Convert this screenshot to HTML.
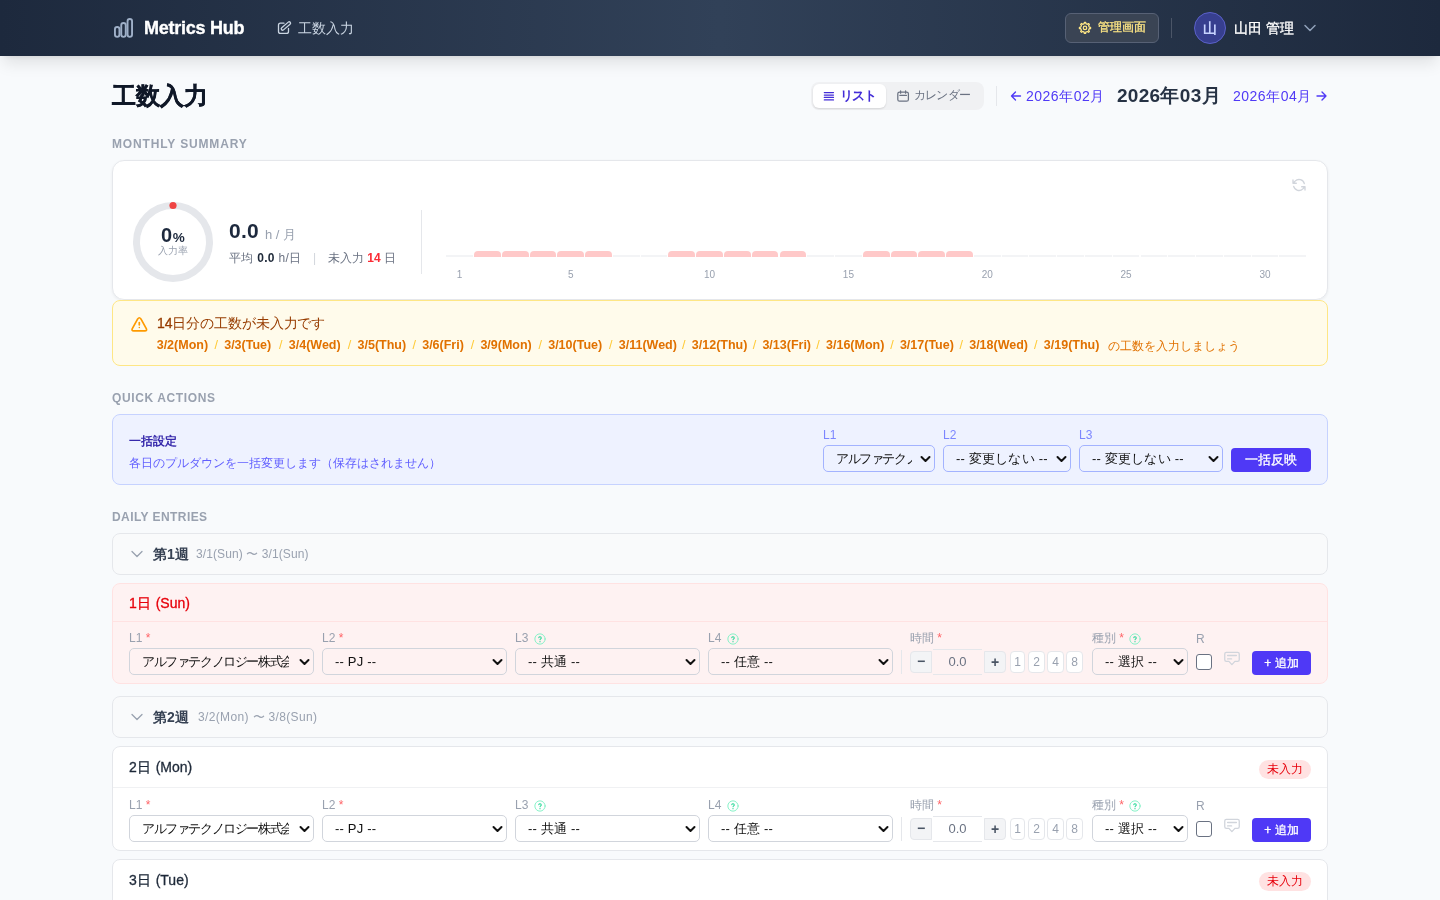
<!DOCTYPE html>
<html lang="ja">
<head>
<meta charset="utf-8">
<title>工数入力 - Metrics Hub</title>
<style>
*{box-sizing:border-box;margin:0;padding:0}
html,body{width:1440px;height:900px;overflow:hidden}
body{font-family:"Liberation Sans",sans-serif;background:#f8fafc;color:#101828;position:relative}
.a{position:absolute;white-space:nowrap;line-height:1}
svg{position:absolute;overflow:visible}
/* header */
.hdr{position:absolute;left:0;top:0;width:1440px;height:56px;background:linear-gradient(90deg,#1d293d 0%,#314158 50%,#1d293d 100%);box-shadow:0 10px 15px -3px rgba(0,0,0,.1),0 4px 6px -4px rgba(0,0,0,.1)}
.logo-t{left:144px;top:19px;font-size:18px;font-weight:700;color:#fff;letter-spacing:-0.25px;-webkit-text-stroke:0.35px #fff}
.nav-t{left:298px;top:21px;font-size:14px;color:#cad5e2}
.admin{left:1065px;top:13px;width:94px;height:30px;border:1px solid #576175;border-radius:6px;background:#3a4454}
.admin-t{left:1098px;top:21px;font-size:12px;color:#fee685;font-weight:700}
.vdiv{left:1171px;top:18px;width:1px;height:20px;background:#4b5567}
.avatar{left:1194px;top:12px;width:32px;height:32px;border-radius:50%;background:#373f8f;border:1px solid #5b61c9;color:#c6d2ff;font-size:14px;text-align:center;line-height:30px;font-weight:700}
.uname{left:1234px;top:21px;font-size:14px;color:#fff;font-weight:700}
/* title row */
.ptitle{left:112px;top:84px;font-size:24px;font-weight:700;color:#101828;-webkit-text-stroke:0.4px #101828}
.toggle{left:811px;top:82px;width:173px;height:28px;background:#f0f1f3;border-radius:8px}
.tg-on{left:813px;top:84px;width:73px;height:24px;background:#fff;border-radius:6px;box-shadow:0 1px 2px rgba(0,0,0,.12)}
.tg-on-t{left:840px;top:89px;font-size:13px;font-weight:700;color:#432dd7;letter-spacing:-1px}
.tg-off-t{left:914px;top:89px;font-size:12px;color:#6a7282;letter-spacing:-0.8px}
.vdiv2{left:996px;top:86px;width:1px;height:20px;background:#e5e7eb}
.mprev{left:1026px;top:89px;font-size:14px;color:#4f39f6;letter-spacing:0.5px}
.mcur{left:1117px;top:86px;font-size:19px;font-weight:700;color:#263244;letter-spacing:0.3px}
.mnext{left:1233px;top:89px;font-size:14px;color:#4f39f6;letter-spacing:0.5px}
.med{font-weight:400 !important;-webkit-text-stroke:0.3px currentColor}
.sect{left:112px;font-size:12px;font-weight:700;color:#99a1af;letter-spacing:0.9px}
/* summary */
.card{position:absolute;left:112px;top:160px;width:1216px;height:140px;background:#fff;border:1px solid #e5e7eb;border-radius:12px;box-shadow:0 1px 3px rgba(0,0,0,.06)}
.warn{position:absolute;left:112px;top:300px;width:1216px;height:66px;background:#fffbeb;border:1px solid #fee685;border-radius:8px}
.qa{position:absolute;left:112px;top:414px;width:1216px;height:71px;background:#eef2ff;border:1px solid #c6d2ff;border-radius:8px}
.week{position:absolute;left:112px;width:1216px;height:42px;background:#f9fafb;border:1px solid #e5e7eb;border-radius:8px}
.day{position:absolute;left:112px;width:1216px;background:#fff;border:1px solid #e5e7eb;border-radius:8px;overflow:hidden}
.day.sun{background:#fef2f2;border-color:#ffe2e2}
.bar{position:absolute;height:2px;top:255px;background:#f3f4f6}
.bar.p{height:6px;top:251px;background:#ffc9c9;border-radius:4px 4px 0 0}
.tick{top:270px;font-size:10px;color:#99a1af;text-align:center;width:30px}
.dl{top:339px;font-size:12.5px;font-weight:700;color:#e17100}
.sl{color:#ffc933;font-weight:400}
.sel{position:absolute;height:27px;border:1px solid #d1d5dc;border-radius:5px}
.sel span{position:absolute;left:12px;top:6px;font-size:13px;color:#111;letter-spacing:0.2px;line-height:1;white-space:nowrap;overflow:hidden}
.lbl{font-size:12px;color:#99a1af}
.req{color:#ff6467}
.qb{position:absolute;width:16px;height:22px;background:#fff;border:1px solid #e5e7eb;border-radius:4px;font-size:12px;color:#99a1af;text-align:center;line-height:20px}
.btn{position:absolute;background:#4f39f6;border-radius:4px;color:#fff;font-size:12px;font-weight:700;text-align:center}
.badge{position:absolute;left:1259px;width:52px;height:19px;background:#ffe2e2;border-radius:10px;color:#e7000b;font-size:12px;text-align:center;line-height:19px}
</style>
</head>
<body>
<div style="position:absolute;left:0;top:0;width:1440px;height:900px;will-change:transform">
<div class="hdr"></div>
<svg style="left:108px;top:12px" width="40" height="32" viewBox="108 12 40 32" fill="none" stroke="#9fb0c8" stroke-width="1.9"><rect x="114.95" y="26.95" width="4.5" height="9.9" rx="2.25"/><rect x="121.25" y="23.05" width="4.5" height="13.8" rx="2.25"/><rect x="127.55" y="18.95" width="4.5" height="17.9" rx="2.25"/></svg>
<div class="a logo-t">Metrics Hub</div>
<svg style="left:272px;top:14px" width="28" height="28" viewBox="0 0 28 28" fill="none" stroke="#cad5e2" stroke-width="1.3" stroke-linecap="round" stroke-linejoin="round"><path d="M12 9.2H8.5A2 2 0 0 0 6.5 11.2V17.4A2 2 0 0 0 8.5 19.4H14.5A2 2 0 0 0 16.5 17.4V14.3"/><rect x="8.2" y="10.65" width="11.4" height="2.7" rx="1.35" transform="rotate(-41 13.9 12)"/></svg>
<div class="a nav-t">工数入力</div>

<div class="a admin"></div>
<svg style="left:1076px;top:19px" width="18" height="18" viewBox="1076 19 18 18" fill="none" stroke="#fee685" stroke-width="1.3" stroke-linejoin="round"><path d="M1084.18 23.68 L1084.41 22.33 L1085.63 22.34 L1085.86 23.69 L1087.40 24.34 L1088.52 23.55 L1089.38 24.41 L1088.59 25.53 L1089.22 27.08 L1090.57 27.31 L1090.56 28.53 L1089.21 28.76 L1088.56 30.30 L1089.35 31.42 L1088.49 32.28 L1087.37 31.49 L1085.82 32.12 L1085.59 33.47 L1084.37 33.46 L1084.14 32.11 L1082.60 31.46 L1081.48 32.25 L1080.62 31.39 L1081.41 30.27 L1080.78 28.72 L1079.43 28.49 L1079.44 27.27 L1080.79 27.04 L1081.44 25.50 L1080.65 24.38 L1081.51 23.52 L1082.63 24.31Z"/><circle cx="1085" cy="27.9" r="1.7"/></svg>
<div class="a admin-t med">管理画面</div>
<div class="a vdiv"></div>
<div class="a avatar">山</div>
<div class="a uname med">山田 管理</div>
<svg style="left:1303px;top:22px" width="14" height="12" viewBox="0 0 14 12" fill="none" stroke="#90a1b9" stroke-width="1.5" stroke-linecap="round" stroke-linejoin="round"><path d="M2 3.5L7 8.5L12 3.5"/></svg>

<div class="a ptitle">工数入力</div>
<div class="a toggle"></div>
<div class="a tg-on"></div>
<svg style="left:818px;top:84px" width="20" height="24" viewBox="818 84 20 24" fill="none" stroke="#432dd7" stroke-width="1.2" stroke-linecap="round"><path d="M824.3 92.6H833.5M824.3 95.1H833.5M824.3 97.4H833.5M824.3 99.9H833.5"/></svg>
<div class="a tg-on-t">リスト</div>
<svg style="left:892px;top:86px" width="22" height="20" viewBox="892 86 22 20" fill="none" stroke="#6a7282" stroke-width="1.25" stroke-linecap="round" stroke-linejoin="round"><rect x="897.8" y="92" width="10.6" height="9.2" rx="1.8"/><path d="M900.6 90.9V93.2M905.6 90.9V93.2M899.9 95.4H906.4"/></svg>
<div class="a tg-off-t">カレンダー</div>
<div class="a vdiv2"></div>
<svg style="left:1010px;top:89px" width="12" height="14" viewBox="0 0 12 14" fill="none" stroke="#4f39f6" stroke-width="1.35" stroke-linecap="round" stroke-linejoin="round"><path d="M10.5 7H1.5M5.5 3L1.5 7L5.5 11"/></svg><div class="a mprev">2026年02月</div>
<div class="a mcur">2026年03月</div>
<div class="a mnext">2026年04月</div><svg style="left:1316px;top:89px" width="12" height="14" viewBox="0 0 12 14" fill="none" stroke="#4f39f6" stroke-width="1.35" stroke-linecap="round" stroke-linejoin="round"><path d="M1 7H10M6 3L10 7L6 11"/></svg>

<div class="a sect" style="top:138px;letter-spacing:0.85px">MONTHLY SUMMARY</div>
<div class="card"></div>
<svg style="left:133px;top:202px" width="80" height="80" viewBox="0 0 80 80"><circle cx="40" cy="40" r="36.5" fill="none" stroke="#e5e7eb" stroke-width="7"/><circle cx="40" cy="3.5" r="3.6" fill="#ef4444"/></svg>
<div class="a" style="left:161px;top:225px;font-size:20px;font-weight:700;color:#1d293d">0<span style="font-size:13.5px;margin-left:0.5px">%</span></div>
<div class="a" style="left:158px;top:246px;font-size:10px;color:#99a1af">入力率</div>
<div class="a" style="left:229px;top:220px;font-size:21px;font-weight:700;color:#1d293d;letter-spacing:0.3px">0.0</div>
<div class="a" style="left:265px;top:228px;font-size:13px;color:#99a1af">h / 月</div>
<div class="a" style="left:229px;top:252px;font-size:12px;color:#6a7282;letter-spacing:0.3px">平均 <b style="color:#1e2939">0.0</b> h/日</div>
<div class="a" style="left:313px;top:252px;font-size:12px;color:#d1d5dc">|</div>
<div class="a" style="left:328px;top:252px;font-size:12px;color:#6a7282">未入力 <b style="color:#fb2c36">14</b> 日</div>
<div class="a" style="left:421px;top:210px;width:1px;height:64px;background:#e5e7eb"></div>
<div class="bar" style="left:446.30px;width:26.70px"></div>
<div class="bar p" style="left:474.07px;width:26.70px"></div>
<div class="bar p" style="left:501.84px;width:26.70px"></div>
<div class="bar p" style="left:529.61px;width:26.70px"></div>
<div class="bar p" style="left:557.38px;width:26.70px"></div>
<div class="bar p" style="left:585.15px;width:26.70px"></div>
<div class="bar" style="left:612.92px;width:26.70px"></div>
<div class="bar" style="left:640.69px;width:26.70px"></div>
<div class="bar p" style="left:668.46px;width:26.70px"></div>
<div class="bar p" style="left:696.23px;width:26.70px"></div>
<div class="bar p" style="left:724.00px;width:26.70px"></div>
<div class="bar p" style="left:751.77px;width:26.70px"></div>
<div class="bar p" style="left:779.54px;width:26.70px"></div>
<div class="bar" style="left:807.31px;width:26.70px"></div>
<div class="bar" style="left:835.08px;width:26.70px"></div>
<div class="bar p" style="left:862.85px;width:26.70px"></div>
<div class="bar p" style="left:890.62px;width:26.70px"></div>
<div class="bar p" style="left:918.39px;width:26.70px"></div>
<div class="bar p" style="left:946.16px;width:26.70px"></div>
<div class="bar" style="left:973.93px;width:26.70px"></div>
<div class="bar" style="left:1001.70px;width:26.70px"></div>
<div class="bar" style="left:1029.47px;width:26.70px"></div>
<div class="bar" style="left:1057.24px;width:26.70px"></div>
<div class="bar" style="left:1085.01px;width:26.70px"></div>
<div class="bar" style="left:1112.78px;width:26.70px"></div>
<div class="bar" style="left:1140.55px;width:26.70px"></div>
<div class="bar" style="left:1168.32px;width:26.70px"></div>
<div class="bar" style="left:1196.09px;width:26.70px"></div>
<div class="bar" style="left:1223.86px;width:26.70px"></div>
<div class="bar" style="left:1251.63px;width:26.70px"></div>
<div class="bar" style="left:1279.40px;width:26.70px"></div>
<div class="a tick" style="left:444.65px">1</div>
<div class="a tick" style="left:555.73px">5</div>
<div class="a tick" style="left:694.58px">10</div>
<div class="a tick" style="left:833.43px">15</div>
<div class="a tick" style="left:972.28px">20</div>
<div class="a tick" style="left:1111.13px">25</div>
<div class="a tick" style="left:1249.98px">30</div>
<svg style="left:1291px;top:177px;transform:scaleX(-1)" width="16" height="16" viewBox="0 0 24 24" fill="none" stroke="#d1d5dc" stroke-width="2" stroke-linecap="round" stroke-linejoin="round"><path d="M16.023 9.348h4.992v-.001M2.985 19.644v-4.992m0 0h4.992m-4.993 0l3.181 3.183a8.25 8.25 0 0013.803-3.7M4.031 9.865a8.25 8.25 0 0113.803-3.7l3.181 3.182m0-4.991v4.99"/></svg>

<div class="warn"></div>
<svg style="left:126px;top:312px" width="26" height="24" viewBox="126 312 26 24" fill="none" stroke="#fe9a00" stroke-width="1.7" stroke-linecap="round" stroke-linejoin="round"><path d="M137.7 318.9Q139.3 316.6 140.9 318.9L146.3 328.6Q147.3 330.9 144.9 330.9H133.7Q131.3 330.9 132.3 328.6Z"/><path d="M139.3 322.6V324.8"/><path d="M139.3 327.6h.01" stroke-width="1.5"/></svg>
<div class="a" style="left:157px;top:316px;font-size:14px;color:#973c00;letter-spacing:-0.1px"><b class="med">14</b>日分の工数が未入力です</div>
<div class="a dl" style="left:156.7px">3/2(Mon)</div>
<div class="a dl sl" style="left:214.5px">/</div>
<div class="a dl" style="left:224.2px">3/3(Tue)</div>
<div class="a dl sl" style="left:279.1px">/</div>
<div class="a dl" style="left:288.8px">3/4(Wed)</div>
<div class="a dl sl" style="left:347.8px">/</div>
<div class="a dl" style="left:357.5px">3/5(Thu)</div>
<div class="a dl sl" style="left:412.5px">/</div>
<div class="a dl" style="left:422.2px">3/6(Fri)</div>
<div class="a dl sl" style="left:470.8px">/</div>
<div class="a dl" style="left:480.4px">3/9(Mon)</div>
<div class="a dl sl" style="left:538.5px">/</div>
<div class="a dl" style="left:548.2px">3/10(Tue)</div>
<div class="a dl sl" style="left:609.1px">/</div>
<div class="a dl" style="left:618.8px">3/11(Wed)</div>
<div class="a dl sl" style="left:682.1px">/</div>
<div class="a dl" style="left:691.8px">3/12(Thu)</div>
<div class="a dl sl" style="left:752.7px">/</div>
<div class="a dl" style="left:762.4px">3/13(Fri)</div>
<div class="a dl sl" style="left:816.3px">/</div>
<div class="a dl" style="left:826.0px">3/16(Mon)</div>
<div class="a dl sl" style="left:890.2px">/</div>
<div class="a dl" style="left:899.9px">3/17(Tue)</div>
<div class="a dl sl" style="left:959.5px">/</div>
<div class="a dl" style="left:969.2px">3/18(Wed)</div>
<div class="a dl sl" style="left:1034.1px">/</div>
<div class="a dl" style="left:1043.8px">3/19(Thu)</div>
<div class="a dl" style="left:1108px;font-weight:400;font-size:12px;top:339.5px">の工数を入力しましょう</div>

<div class="a sect" style="top:392px;letter-spacing:0.62px">QUICK ACTIONS</div>
<div class="qa"></div>
<div class="a" style="left:129px;top:435px;font-size:12px;font-weight:700;color:#372aac">一括設定</div>
<div class="a" style="left:129px;top:457px;font-size:12px;color:#615fff">各日のプルダウンを一括変更します（保存はされません）</div>
<div class="a" style="left:823px;top:429px;font-size:12px;color:#7c86ff">L1</div>
<div class="a" style="left:943px;top:429px;font-size:12px;color:#7c86ff">L2</div>
<div class="a" style="left:1079px;top:429px;font-size:12px;color:#7c86ff">L3</div>
<div class="sel" style="left:823px;top:445px;width:112px;border-color:#a3b3ff"><span style="width:76px;letter-spacing:-1.4px">アルファテクノロジー株式会社</span><svg style="right:3px;top:8.5px" width="11" height="8" viewBox="0 0 11 8" fill="none" stroke="#111" stroke-width="2" stroke-linecap="round" stroke-linejoin="round"><path d="M1.5 2L5.5 6L9.5 2"/></svg></div>
<div class="sel" style="left:943px;top:445px;width:128px;border-color:#a3b3ff"><span>-- 変更しない --</span><svg style="right:3px;top:8.5px" width="11" height="8" viewBox="0 0 11 8" fill="none" stroke="#111" stroke-width="2" stroke-linecap="round" stroke-linejoin="round"><path d="M1.5 2L5.5 6L9.5 2"/></svg></div>
<div class="sel" style="left:1079px;top:445px;width:144px;border-color:#a3b3ff"><span>-- 変更しない --</span><svg style="right:3px;top:8.5px" width="11" height="8" viewBox="0 0 11 8" fill="none" stroke="#111" stroke-width="2" stroke-linecap="round" stroke-linejoin="round"><path d="M1.5 2L5.5 6L9.5 2"/></svg></div>
<div class="btn med" style="left:1231px;top:448px;width:80px;height:24px;line-height:24px;font-size:13px">一括反映</div>

<div class="a sect" style="top:511px;letter-spacing:0.42px">DAILY ENTRIES</div>
<div class="week" style="top:533px"></div>
<svg style="left:130px;top:548px" width="14" height="12" viewBox="0 0 14 12" fill="none" stroke="#99a1af" stroke-width="1.3" stroke-linecap="round" stroke-linejoin="round"><path d="M2 3.5L7 8.5L12 3.5"/></svg>
<div class="a" style="left:153px;top:547px;font-size:14px;font-weight:700;color:#364153">第1週</div>
<div class="a" style="left:196px;top:548px;font-size:12px;color:#99a1af;letter-spacing:0.1px">3/1(Sun) 〜 3/1(Sun)</div>

<div class="day sun" style="top:583px;height:101px"><div style="position:absolute;left:0;top:37px;width:100%;height:1px;background:#ffe2e2"></div></div>
<div class="a med" style="left:129px;top:596px;font-size:14px;color:#e7000b;word-spacing:1px">1日 (Sun)</div>
<div class="a lbl" style="left:129px;top:632px">L1 <span class="req">*</span></div>
<div class="sel" style="left:129px;top:648px;width:185px;background:transparent"><span style="width:147px;letter-spacing:-1.4px">アルファテクノロジー株式会社</span><svg style="right:3px;top:8.5px" width="11" height="8" viewBox="0 0 11 8" fill="none" stroke="#111" stroke-width="2" stroke-linecap="round" stroke-linejoin="round"><path d="M1.5 2L5.5 6L9.5 2"/></svg></div>
<div class="a lbl" style="left:322px;top:632px">L2 <span class="req">*</span></div>
<div class="sel" style="left:322px;top:648px;width:185px;background:transparent"><span>-- PJ --</span><svg style="right:3px;top:8.5px" width="11" height="8" viewBox="0 0 11 8" fill="none" stroke="#111" stroke-width="2" stroke-linecap="round" stroke-linejoin="round"><path d="M1.5 2L5.5 6L9.5 2"/></svg></div>
<div class="a lbl" style="left:515px;top:632px">L3</div>
<svg style="left:534px;top:633px" width="12" height="12" viewBox="0 0 24 24" fill="none" stroke-linecap="round" stroke-linejoin="round"><circle cx="12" cy="12" r="10.3" stroke="#7ff0c4" stroke-width="1.9"/><path d="M9.6 9.2a2.5 2.5 0 0 1 4.9.6c0 1.6-2.4 2.2-2.4 3.8" stroke="#2fd99b" stroke-width="2.2"/><path d="M12 17.3h.01" stroke="#2fd99b" stroke-width="2.6"/></svg>
<div class="sel" style="left:515px;top:648px;width:185px;background:transparent"><span>-- 共通 --</span><svg style="right:3px;top:8.5px" width="11" height="8" viewBox="0 0 11 8" fill="none" stroke="#111" stroke-width="2" stroke-linecap="round" stroke-linejoin="round"><path d="M1.5 2L5.5 6L9.5 2"/></svg></div>
<div class="a lbl" style="left:708px;top:632px">L4</div>
<svg style="left:727px;top:633px" width="12" height="12" viewBox="0 0 24 24" fill="none" stroke-linecap="round" stroke-linejoin="round"><circle cx="12" cy="12" r="10.3" stroke="#7ff0c4" stroke-width="1.9"/><path d="M9.6 9.2a2.5 2.5 0 0 1 4.9.6c0 1.6-2.4 2.2-2.4 3.8" stroke="#2fd99b" stroke-width="2.2"/><path d="M12 17.3h.01" stroke="#2fd99b" stroke-width="2.6"/></svg>
<div class="sel" style="left:708px;top:648px;width:185px;background:transparent"><span>-- 任意 --</span><svg style="right:3px;top:8.5px" width="11" height="8" viewBox="0 0 11 8" fill="none" stroke="#111" stroke-width="2" stroke-linecap="round" stroke-linejoin="round"><path d="M1.5 2L5.5 6L9.5 2"/></svg></div>
<div class="a" style="left:901px;top:650px;width:1px;height:24px;background:#e5e7eb"></div>
<div class="a lbl" style="left:910px;top:632px">時間 <span class="req">*</span></div>
<div class="a" style="left:910px;top:651px;width:22px;height:22px;background:#f3f4f6;border:1px solid #e5e7eb;border-radius:4px 0 0 4px;font-size:14px;font-weight:700;color:#4a5565;text-align:center;line-height:19px">&minus;</div>
<div class="a" style="left:933px;top:649px;width:49px;height:26px;border-top:1px solid #e5e7eb;border-bottom:1px solid #e5e7eb;font-size:13px;color:#6a7282;text-align:center;line-height:24px">0.0</div>
<div class="a" style="left:984px;top:651px;width:22px;height:22px;background:#f3f4f6;border:1px solid #e5e7eb;border-radius:0 4px 4px 0;font-size:14px;font-weight:700;color:#4a5565;text-align:center;line-height:20px">+</div>
<div class="qb" style="left:1010px;top:651px;width:15px">1</div>
<div class="qb" style="left:1028px;top:651px;width:17px">2</div>
<div class="qb" style="left:1047px;top:651px;width:17px">4</div>
<div class="qb" style="left:1066px;top:651px;width:17px">8</div>
<div class="a lbl" style="left:1092px;top:632px">種別 <span class="req">*</span></div>
<svg style="left:1129px;top:633px" width="12" height="12" viewBox="0 0 24 24" fill="none" stroke-linecap="round" stroke-linejoin="round"><circle cx="12" cy="12" r="10.3" stroke="#7ff0c4" stroke-width="1.9"/><path d="M9.6 9.2a2.5 2.5 0 0 1 4.9.6c0 1.6-2.4 2.2-2.4 3.8" stroke="#2fd99b" stroke-width="2.2"/><path d="M12 17.3h.01" stroke="#2fd99b" stroke-width="2.6"/></svg>
<div class="sel" style="left:1092px;top:648px;width:96px;background:transparent"><span>-- 選択 --</span><svg style="right:3px;top:8.5px" width="11" height="8" viewBox="0 0 11 8" fill="none" stroke="#111" stroke-width="2" stroke-linecap="round" stroke-linejoin="round"><path d="M1.5 2L5.5 6L9.5 2"/></svg></div>
<div class="a lbl" style="left:1196px;top:633px">R</div>
<div class="a" style="left:1196px;top:654px;width:16px;height:16px;background:#fff;border:1px solid #6a7282;border-radius:3px"></div>
<svg style="left:1218px;top:645px" width="28" height="24" viewBox="0 0 28 24" fill="none" stroke="#d1d5dc" stroke-width="1.3" stroke-linejoin="round" stroke-linecap="round"><path d="M6.75 9A1.65 1.65 0 0 1 8.4 7.35H19.6A1.65 1.65 0 0 1 21.25 9V14.75A1.65 1.65 0 0 1 19.6 16.4H16.9L13.9 19.6L10.9 16.4H8.4A1.65 1.65 0 0 1 6.75 14.75Z"/><path d="M9.6 10.5H18.4M9.6 13.9H13.6"/></svg>
<div class="btn med" style="left:1252px;top:651px;width:59px;height:24px;line-height:24px">+ 追加</div>

<div class="week" style="top:696px"></div>
<svg style="left:130px;top:711px" width="14" height="12" viewBox="0 0 14 12" fill="none" stroke="#99a1af" stroke-width="1.3" stroke-linecap="round" stroke-linejoin="round"><path d="M2 3.5L7 8.5L12 3.5"/></svg>
<div class="a" style="left:153px;top:710px;font-size:14px;font-weight:700;color:#364153">第2週</div>
<div class="a" style="left:198px;top:711px;font-size:12px;color:#99a1af;letter-spacing:0.35px">3/2(Mon) 〜 3/8(Sun)</div>

<div class="day" style="top:746px;height:105px"><div style="position:absolute;left:0;top:40px;width:100%;height:1px;background:#f0f1f3"></div></div>
<div class="a med" style="left:129px;top:760px;font-size:14px;color:#1e2939;word-spacing:1px">2日 (Mon)</div>
<div class="badge" style="top:760px">未入力</div>
<div class="a lbl" style="left:129px;top:799px">L1 <span class="req">*</span></div>
<div class="sel" style="left:129px;top:815px;width:185px;background:transparent"><span style="width:147px;letter-spacing:-1.4px">アルファテクノロジー株式会社</span><svg style="right:3px;top:8.5px" width="11" height="8" viewBox="0 0 11 8" fill="none" stroke="#111" stroke-width="2" stroke-linecap="round" stroke-linejoin="round"><path d="M1.5 2L5.5 6L9.5 2"/></svg></div>
<div class="a lbl" style="left:322px;top:799px">L2 <span class="req">*</span></div>
<div class="sel" style="left:322px;top:815px;width:185px;background:transparent"><span>-- PJ --</span><svg style="right:3px;top:8.5px" width="11" height="8" viewBox="0 0 11 8" fill="none" stroke="#111" stroke-width="2" stroke-linecap="round" stroke-linejoin="round"><path d="M1.5 2L5.5 6L9.5 2"/></svg></div>
<div class="a lbl" style="left:515px;top:799px">L3</div>
<svg style="left:534px;top:800px" width="12" height="12" viewBox="0 0 24 24" fill="none" stroke-linecap="round" stroke-linejoin="round"><circle cx="12" cy="12" r="10.3" stroke="#7ff0c4" stroke-width="1.9"/><path d="M9.6 9.2a2.5 2.5 0 0 1 4.9.6c0 1.6-2.4 2.2-2.4 3.8" stroke="#2fd99b" stroke-width="2.2"/><path d="M12 17.3h.01" stroke="#2fd99b" stroke-width="2.6"/></svg>
<div class="sel" style="left:515px;top:815px;width:185px;background:transparent"><span>-- 共通 --</span><svg style="right:3px;top:8.5px" width="11" height="8" viewBox="0 0 11 8" fill="none" stroke="#111" stroke-width="2" stroke-linecap="round" stroke-linejoin="round"><path d="M1.5 2L5.5 6L9.5 2"/></svg></div>
<div class="a lbl" style="left:708px;top:799px">L4</div>
<svg style="left:727px;top:800px" width="12" height="12" viewBox="0 0 24 24" fill="none" stroke-linecap="round" stroke-linejoin="round"><circle cx="12" cy="12" r="10.3" stroke="#7ff0c4" stroke-width="1.9"/><path d="M9.6 9.2a2.5 2.5 0 0 1 4.9.6c0 1.6-2.4 2.2-2.4 3.8" stroke="#2fd99b" stroke-width="2.2"/><path d="M12 17.3h.01" stroke="#2fd99b" stroke-width="2.6"/></svg>
<div class="sel" style="left:708px;top:815px;width:185px;background:transparent"><span>-- 任意 --</span><svg style="right:3px;top:8.5px" width="11" height="8" viewBox="0 0 11 8" fill="none" stroke="#111" stroke-width="2" stroke-linecap="round" stroke-linejoin="round"><path d="M1.5 2L5.5 6L9.5 2"/></svg></div>
<div class="a" style="left:901px;top:817px;width:1px;height:24px;background:#e5e7eb"></div>
<div class="a lbl" style="left:910px;top:799px">時間 <span class="req">*</span></div>
<div class="a" style="left:910px;top:818px;width:22px;height:22px;background:#f3f4f6;border:1px solid #e5e7eb;border-radius:4px 0 0 4px;font-size:14px;font-weight:700;color:#4a5565;text-align:center;line-height:19px">&minus;</div>
<div class="a" style="left:933px;top:816px;width:49px;height:26px;border-top:1px solid #e5e7eb;border-bottom:1px solid #e5e7eb;font-size:13px;color:#6a7282;text-align:center;line-height:24px">0.0</div>
<div class="a" style="left:984px;top:818px;width:22px;height:22px;background:#f3f4f6;border:1px solid #e5e7eb;border-radius:0 4px 4px 0;font-size:14px;font-weight:700;color:#4a5565;text-align:center;line-height:20px">+</div>
<div class="qb" style="left:1010px;top:818px;width:15px">1</div>
<div class="qb" style="left:1028px;top:818px;width:17px">2</div>
<div class="qb" style="left:1047px;top:818px;width:17px">4</div>
<div class="qb" style="left:1066px;top:818px;width:17px">8</div>
<div class="a lbl" style="left:1092px;top:799px">種別 <span class="req">*</span></div>
<svg style="left:1129px;top:800px" width="12" height="12" viewBox="0 0 24 24" fill="none" stroke-linecap="round" stroke-linejoin="round"><circle cx="12" cy="12" r="10.3" stroke="#7ff0c4" stroke-width="1.9"/><path d="M9.6 9.2a2.5 2.5 0 0 1 4.9.6c0 1.6-2.4 2.2-2.4 3.8" stroke="#2fd99b" stroke-width="2.2"/><path d="M12 17.3h.01" stroke="#2fd99b" stroke-width="2.6"/></svg>
<div class="sel" style="left:1092px;top:815px;width:96px;background:transparent"><span>-- 選択 --</span><svg style="right:3px;top:8.5px" width="11" height="8" viewBox="0 0 11 8" fill="none" stroke="#111" stroke-width="2" stroke-linecap="round" stroke-linejoin="round"><path d="M1.5 2L5.5 6L9.5 2"/></svg></div>
<div class="a lbl" style="left:1196px;top:800px">R</div>
<div class="a" style="left:1196px;top:821px;width:16px;height:16px;background:#fff;border:1px solid #6a7282;border-radius:3px"></div>
<svg style="left:1218px;top:812px" width="28" height="24" viewBox="0 0 28 24" fill="none" stroke="#d1d5dc" stroke-width="1.3" stroke-linejoin="round" stroke-linecap="round"><path d="M6.75 9A1.65 1.65 0 0 1 8.4 7.35H19.6A1.65 1.65 0 0 1 21.25 9V14.75A1.65 1.65 0 0 1 19.6 16.4H16.9L13.9 19.6L10.9 16.4H8.4A1.65 1.65 0 0 1 6.75 14.75Z"/><path d="M9.6 10.5H18.4M9.6 13.9H13.6"/></svg>
<div class="btn med" style="left:1252px;top:818px;width:59px;height:24px;line-height:24px">+ 追加</div>

<div class="day" style="top:859px;height:80px"></div>
<div class="a med" style="left:129px;top:873px;font-size:14px;color:#1e2939;word-spacing:1px">3日 (Tue)</div>
<div class="badge" style="top:872px">未入力</div>
</div>
</body>
</html>
